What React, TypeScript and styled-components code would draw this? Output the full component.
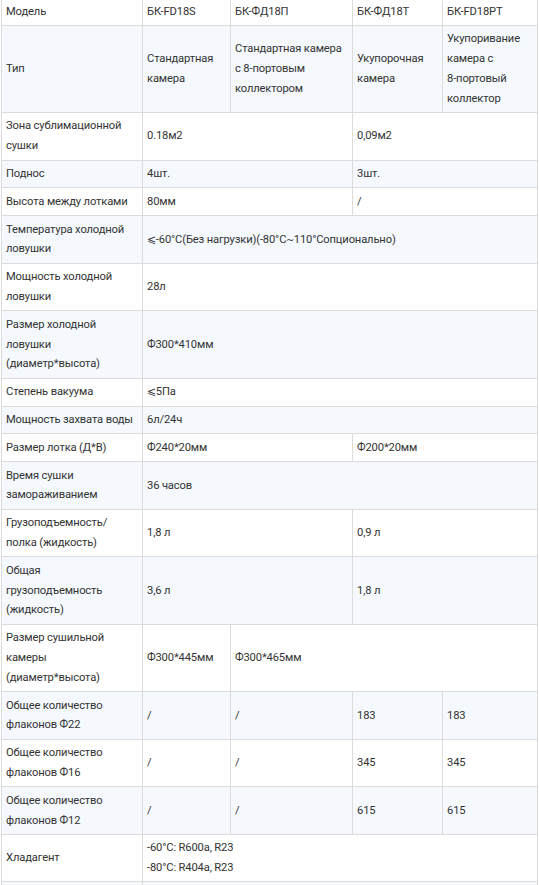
import styled, { createGlobalStyle } from "styled-components";

const GlobalStyle = createGlobalStyle`
  html, body {
    margin: 0;
    padding: 0;
    background: #fff;
  }
  body {
    font-family: Roboto, "Liberation Sans", Arial, sans-serif;
    color: #333;
  }
`;

interface ICell {
  text: string | string[];
  span?: number;
}

interface IRow {
  label: string;
  cells: ICell[];
}

const rows: IRow[] = [
  {
    label: "Модель",
    cells: [
      { text: "БК-FD18S" },
      { text: "БК-ФД18П" },
      { text: "БК-ФД18Т" },
      { text: "БК-FD18PT" },
    ],
  },
  {
    label: "Тип",
    cells: [
      { text: "Стандартная камера" },
      { text: "Стандартная камера с 8-портовым коллектором" },
      { text: "Укупорочная камера" },
      { text: "Укупоривание камера с 8-портовый коллектор" },
    ],
  },
  {
    label: "Зона сублимационной сушки",
    cells: [
      { text: "0.18м2", span: 2 },
      { text: "0,09м2", span: 2 },
    ],
  },
  {
    label: "Поднос",
    cells: [
      { text: "4шт.", span: 2 },
      { text: "3шт.", span: 2 },
    ],
  },
  {
    label: "Высота между лотками",
    cells: [
      { text: "80мм", span: 2 },
      { text: "/", span: 2 },
    ],
  },
  {
    label: "Температура холодной ловушки",
    cells: [
      {
        text: "⩽-60°C(Без нагрузки)(-80°C~110°Сопционально)",
        span: 4,
      },
    ],
  },
  {
    label: "Мощность холодной ловушки",
    cells: [{ text: "28л", span: 4 }],
  },
  {
    label: "Размер холодной ловушки (диаметр*высота)",
    cells: [{ text: "Ф300*410мм", span: 4 }],
  },
  {
    label: "Степень вакуума",
    cells: [{ text: "⩽5Па", span: 4 }],
  },
  {
    label: "Мощность захвата воды",
    cells: [{ text: "6л/24ч", span: 4 }],
  },
  {
    label: "Размер лотка (Д*В)",
    cells: [
      { text: "Ф240*20мм", span: 2 },
      { text: "Ф200*20мм", span: 2 },
    ],
  },
  {
    label: "Время сушки замораживанием",
    cells: [{ text: "36 часов", span: 4 }],
  },
  {
    label: "Грузоподъемность/ полка (жидкость)",
    cells: [
      { text: "1,8 л", span: 2 },
      { text: "0,9 л", span: 2 },
    ],
  },
  {
    label: "Общая грузоподъемность (жидкость)",
    cells: [
      { text: "3,6 л", span: 2 },
      { text: "1,8 л", span: 2 },
    ],
  },
  {
    label: "Размер сушильной камеры (диаметр*высота)",
    cells: [
      { text: "Ф300*445мм" },
      { text: "Ф300*465мм", span: 3 },
    ],
  },
  {
    label: "Общее количество флаконов Ф22",
    cells: [{ text: "/" }, { text: "/" }, { text: "183" }, { text: "183" }],
  },
  {
    label: "Общее количество флаконов Ф16",
    cells: [{ text: "/" }, { text: "/" }, { text: "345" }, { text: "345" }],
  },
  {
    label: "Общее количество флаконов Ф12",
    cells: [{ text: "/" }, { text: "/" }, { text: "615" }, { text: "615" }],
  },
  {
    label: "Хладагент",
    cells: [
      { text: ["-60°C: R600a, R23", "-80°C: R404a, R23"], span: 4 },
    ],
  },
];

const colWidths = [141, 88, 122, 90, 95];

// keep words like "8-портовый" on one line
function renderText(text: string) {
  if (!/\d-\S/.test(text)) return text;
  return text.split(" ").map((word, i, all) => {
    const sep = i < all.length - 1 ? " " : "";
    return /\d-/.test(word) ? (
      <span key={i}>
        <NoBreak>{word}</NoBreak>
        {sep}
      </span>
    ) : (
      word + sep
    );
  });
}

function App() {
  return (
    <>
      <GlobalStyle />
      <Wrapper>
        <SpecTable>
          <colgroup>
            {colWidths.map((w, i) => (
              <col key={i} style={{ width: w }} />
            ))}
          </colgroup>
          <tbody>
            {rows.map((row, i) => (
              <Row key={row.label} $striped={i % 2 === 1}>
                <Cell>{row.label}</Cell>
                {row.cells.map((cell, j) => (
                  <Cell key={j} colSpan={cell.span || 1}>
                    {Array.isArray(cell.text)
                      ? cell.text.map((line) => <Line key={line}>{line}</Line>)
                      : renderText(cell.text)}
                  </Cell>
                ))}
              </Row>
            ))}
            <Row $striped={true}>
              <Cell>&nbsp;</Cell>
              <Cell colSpan={4}>&nbsp;</Cell>
            </Row>
          </tbody>
        </SpecTable>
      </Wrapper>
    </>
  );
}

const Wrapper = styled.div`
  width: 539px;
  height: 885px;
  overflow: hidden;
  padding-left: 1px;
  box-sizing: border-box;
`;

const SpecTable = styled.table`
  width: 536px;
  margin-top: -3px;
  border-collapse: collapse;
  table-layout: fixed;
  font-size: 11.2px;
  letter-spacing: -0.15px;
  line-height: 19.8px;
`;

const Row = styled.tr<{ $striped: boolean }>`
  background-color: ${({ $striped }) => ($striped ? "#f5f9fe" : "#fff")};
`;

const Cell = styled.td`
  border: 1px solid #dcdcdc;
  padding: 3.5px 5px 3.5px 4px;
  vertical-align: middle;
  text-align: left;
  color: #333;
  word-wrap: break-word;
`;

const NoBreak = styled.span`
  white-space: nowrap;
`;

const Line = styled.div``;

export default App;
